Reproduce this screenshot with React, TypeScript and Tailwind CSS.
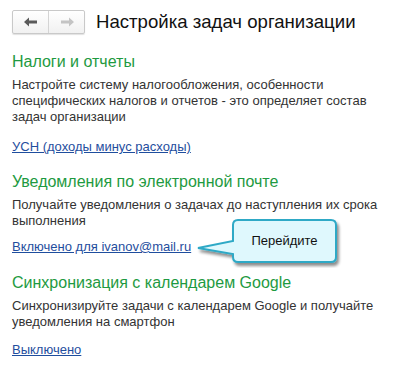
const Arrow = ({ dir, color }: { dir: "left" | "right"; color: string }) => (
  <svg width="14" height="10" viewBox="0 0 14 10" className={dir === "right" ? "-scale-x-100" : ""}>
    <path d="M0 5 L5 0.5 L5 3.5 L13 3.5 L13 6.5 L5 6.5 L5 9.5 Z" fill={color} />
  </svg>
);

const Section = ({
  title,
  text,
  link,
  linkGap,
}: {
  title: string;
  text: React.ReactNode;
  link: string;
  linkGap: string;
}) => (
  <div className="flex flex-col">
    <div className="text-[16px] leading-[20px] text-[#1e9a41]">{title}</div>
    <div className="mt-[5px] text-[13px] leading-[16px] text-[#333333]">{text}</div>
    <div className={`${linkGap} text-[13px] leading-[16px]`}>
      <a href="#" className="text-[#1f4e9e] underline">
        {link}
      </a>
    </div>
  </div>
);

export default function App() {
  return (
    <div
      className="relative h-[365px] w-[399px] overflow-hidden bg-white"
      style={{ fontFamily: '"Liberation Sans", Arial, sans-serif' }}
    >
      <div className="flex items-center gap-[11px] px-[12px] pt-[10px]">
        <div className="flex h-[24px] rounded-[2px] border border-[#c9c9c9] bg-gradient-to-b from-white to-[#f1f1f1] shadow-[0_1px_1px_rgba(0,0,0,0.12)]">
          <button className="flex w-[36px] items-center justify-center border-r border-[#d4d4d4]">
            <Arrow dir="left" color="#5a5a5a" />
          </button>
          <button className="flex w-[35px] items-center justify-center">
            <Arrow dir="right" color="#c4c4c4" />
          </button>
        </div>
        <div className="text-[18.6px] leading-[24px] text-[#111]">Настройка задач организации</div>
      </div>

      <div className="flex flex-col px-[12px] pt-[18px]">
        <Section
          title="Налоги и отчеты"
          text={
            <>
              Настройте систему налогообложения, особенности
              <br />
              специфических налогов и отчетов - это определяет состав
              <br />
              задач организации
            </>
          }
          link="УСН (доходы минус расходы)"
          linkGap="mt-[14px]"
        />
        <div className="h-[17px]" />
        <Section
          title="Уведомления по электронной почте"
          text={
            <>
              Получайте уведомления о задачах до наступления их срока
              <br />
              выполнения
            </>
          }
          link="Включено для ivanov@mail.ru"
          linkGap="mt-[10px]"
        />
        <div className="h-[18px]" />
        <Section
          title="Синхронизация с календарем Google"
          text={
            <>
              Синхронизируйте задачи с календарем Google и получайте
              <br />
              уведомления на смартфон
            </>
          }
          link="Выключено"
          linkGap="mt-[12px]"
        />
      </div>

      {/* callout */}
      <div className="absolute left-[196px] top-[218px] h-[50px] w-[146px]">
        <svg width="146" height="50" viewBox="0 0 146 50" className="absolute left-0 top-0">
          <defs>
            <filter id="sh" x="-10%" y="-10%" width="130%" height="140%">
              <feGaussianBlur in="SourceAlpha" stdDeviation="1.6" />
              <feOffset dx="2" dy="3" />
              <feComponentTransfer>
                <feFuncA type="linear" slope="0.45" />
              </feComponentTransfer>
              <feMerge>
                <feMergeNode />
                <feMergeNode in="SourceGraphic" />
              </feMerge>
            </filter>
          </defs>
          <path
            d="M42 2 H135 Q140 2 140 7 V39 Q140 44 135 44 H42 Q37 44 37 39 V36 L2 30 L37 23 V7 Q37 2 42 2 Z"
            fill="#dff8fd"
            stroke="#2fa9c6"
            strokeWidth="2"
            filter="url(#sh)"
          />
        </svg>
        <div className="absolute left-[37px] top-[2px] flex h-[42px] w-[103px] items-center justify-center text-[13px] text-[#111]">
          Перейдите
        </div>
      </div>
    </div>
  );
}
